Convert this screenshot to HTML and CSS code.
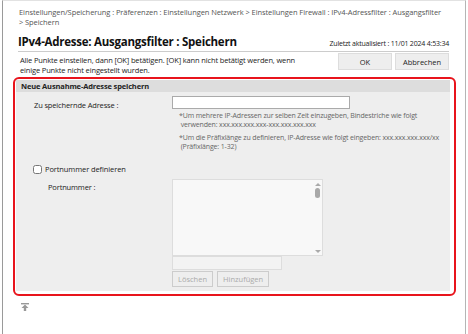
FILE: index.html
```html
<!doctype html>
<html lang=de>
  <head>
    <meta charset=utf-8>
    <title>IPv4-Adresse: Ausgangsfilter : Speichern</title>
    <link rel="stylesheet" href="styles.css">
  </head>
  <body>
<div class="frame">
  <div class="crumbs">Einstellungen/Speicherung : Präferenzen : Einstellungen Netzwerk &gt; Einstellungen Firewall : IPv4-Adressfilter : Ausgangsfilter<br>&gt; Speichern</div>
  <div class="titlebar">
    <h1>IPv4-Adresse: Ausgangsfilter : Speichern</h1>
    <span class="updated">Zuletzt aktualisiert : 11/01 2024 4:53:34</span>
  </div>
  <div class="intro">
    <p>Alle Punkte einstellen, dann [OK] betätigen. [OK] kann nicht betätigt werden, wenn einige Punkte nicht eingestellt wurden.</p>
    <div class="actions">
      <button class="btn">OK</button>
      <button class="btn">Abbrechen</button>
    </div>
  </div>
  <div class="highlight">
    <fieldset class="panel">
      <legend>Neue Ausnahme-Adresse speichern</legend>
      <div class="row">
        <label class="lbl" for="addr">Zu speichernde Adresse :</label>
        <div class="field">
          <input type="text" id="addr" class="addr">
          <p class="note">*Um mehrere IP-Adressen zur selben Zeit einzugeben, Bindestriche wie folgt<br>&nbsp;verwenden: xxx.xxx.xxx.xxx-xxx.xxx.xxx.xxx</p>
          <p class="note">*Um die Präfixlänge zu definieren, IP-Adresse wie folgt eingeben: xxx.xxx.xxx.xxx/xx<br>&nbsp;(Präfixlänge: 1-32)</p>
        </div>
      </div>
      <label class="check"><input type="checkbox"> Portnummer definieren</label>
      <div class="row port">
        <span class="lbl">Portnummer :</span>
        <div class="field">
          <div class="listbox">
            <div class="scroll">
              <span class="arrow up"></span>
              <span class="thumb"></span>
              <span class="grow"></span>
              <span class="arrow down"></span>
            </div>
          </div>
          <input type="text" class="portin" disabled>
          <div class="small-actions">
            <button class="btn dis" disabled>Löschen</button>
            <button class="btn dis" disabled>Hinzufügen</button>
          </div>
        </div>
      </div>
    </fieldset>
  </div>
  <div class="totop"><svg width="8" height="8" viewBox="0 0 8 8"><rect x="0" y="0" width="8" height="1.4" fill="#999"/><path d="M4 1.6 L7.5 5 L5.2 5 L5.2 8 L2.8 8 L2.8 5 L0.5 5 Z" fill="#999"/></svg></div>
</div>
  </body>
</html>
```

FILE: styles.css
```css
html, body {
  margin: 0;
  height: 100%;
}
* {
  box-sizing: border-box;
}
body {
  background: #fff;
  font-family: "Open Sans", "Noto Sans", sans-serif;
  color: #333;
  padding-left: 2px;
}

.frame {
  width: 464px;
  height: 334px;
  border-left: 1px solid #9a9a9a;
  border-right: 1px solid #b5b5b5;
  border-top: 1px solid #e2e2e2;
  padding: 6px 16px 0 15px;
}

.crumbs {
  font-size: 7.5px;
  line-height: 10px;
  color: #555;
  letter-spacing: -0.08px;
  padding-left: 1px;
  white-space: nowrap;
}

.titlebar {
  display: flex;
  align-items: baseline;
  justify-content: space-between;
  border-bottom: 1px solid #ccc;
  padding: 7px 0 2px;
}
h1 {
  margin: 0;
  font-size: 11.5px;
  line-height: 15px;
  color: #111;
  letter-spacing: -0.25px;
}
.updated {
  font-size: 7px;
  color: #222;
  letter-spacing: -0.2px;
}

.intro {
  display: flex;
  justify-content: space-between;
  align-items: flex-start;
  padding-top: 1px;
}
.intro p {
  margin: 2px 0 0 2px;
  font-size: 7.5px;
  line-height: 10px;
  color: #222;
  width: 290px;
  letter-spacing: -0.15px;
}
.actions {
  display: flex;
  gap: 3px;
}
.btn {
  font-family: inherit;
  font-size: 7.5px;
  color: #222;
  background: #eee;
  border: 1px solid #ddd;
  height: 17px;
  width: 54px;
  padding: 0;
}

.highlight {
  margin: 2px -7px 0 -5px;
  border: 2px solid #e8141c;
  border-radius: 6px;
  padding: 1px 4px 3px 1px;
  height: 219px;
}
.panel {
  margin: 0;
  padding: 0 0 6px;
  border: 0;
  background: #eee;
  height: 100%;
}
.panel legend {
  float: left;
  width: 100%;
  background: #ddd;
  font-size: 7.5px;
  font-weight: bold;
  color: #222;
  padding: 1px 5px;
  line-height: 10px;
  letter-spacing: -0.15px;
}

.row {
  clear: both;
  display: flex;
  padding-top: 4px;
}
.lbl {
  width: 156px;
  padding: 4px 0 0 18px;
  font-size: 7.5px;
  color: #222;
  letter-spacing: -0.15px;
}
.port .lbl {
  padding: 3px 0 0 32px;
}
.field {
  display: flex;
  flex-direction: column;
}
.addr {
  width: 178px;
  height: 13px;
  border: 1px solid #aaa;
  background: #fff;
  margin: 0;
}
.note {
  margin: 4px 0 0 7px;
  font-size: 7px;
  line-height: 9px;
  color: #666;
  letter-spacing: -0.15px;
}
.addr + .note {
  margin-top: 2px;
}

.check {
  display: flex;
  align-items: center;
  gap: 3px;
  margin: 13px 0 0 17px;
  font-size: 7.5px;
  color: #222;
  letter-spacing: -0.1px;
}
.check input {
  margin: 0;
  width: 9px;
  height: 9px;
}

.port {
  padding-top: 5px;
}
.listbox {
  width: 151px;
  height: 77px;
  background: #f8f8f8;
  border: 1px solid #ddd;
  display: flex;
  justify-content: flex-end;
}
.scroll {
  width: 9px;
  display: flex;
  flex-direction: column;
  align-items: center;
  padding: 3px 0 2px;
  gap: 2px;
}
.arrow {
  width: 0;
  height: 0;
  border-left: 3px solid transparent;
  border-right: 3px solid transparent;
}
.arrow.up {
  border-bottom: 3px solid #aaa;
}
.arrow.down {
  border-top: 3px solid #aaa;
}
.thumb {
  width: 5px;
  height: 10px;
  border-radius: 3px;
  background: #a8a8a8;
}
.grow {
  flex-grow: 1;
}
.portin {
  width: 110px;
  height: 14px;
  margin: 0;
  border: 1px solid #ddd;
  background: #f3f3f3;
}
.small-actions {
  display: flex;
  gap: 4px;
  margin-top: 1px;
}
.btn.dis {
  color: #aaa;
  width: auto;
  height: 16px;
  padding: 0 5px;
  border: 1px solid #ccc;
  background: #eee;
}

.totop {
  padding: 7px 0 0 3px;
  line-height: 0;
}
```
